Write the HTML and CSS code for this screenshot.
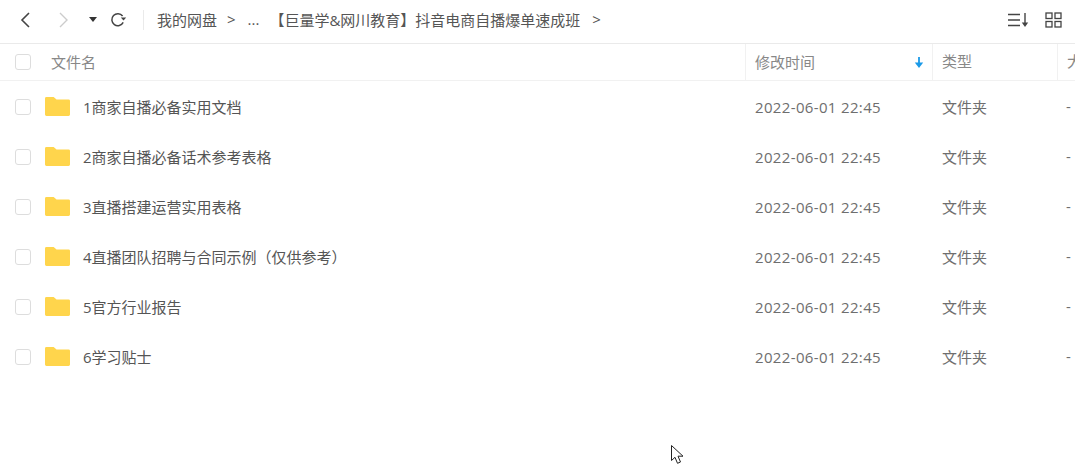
FILE: index.html
```html
<!DOCTYPE html>
<html lang="zh-CN">

<head>
    <meta charset="UTF-8">
    <title>我的网盘</title>
    <link rel="stylesheet" href="styles.css">
</head>

<body>
    <div class="toolbar">
        <svg class="nav_back" width="12" height="16" viewBox="0 0 12 16"><path d="M10 1 3 8l7 7" fill="none" stroke="#444" stroke-width="1.6"/></svg>
        <svg class="nav_forward" width="12" height="16" viewBox="0 0 12 16"><path d="M2 1l7 7-7 7" fill="none" stroke="#ccc" stroke-width="1.4"/></svg>
        <svg class="nav_drop" width="8" height="5" viewBox="0 0 8 5"><path d="M0 0h8L4 5z" fill="#333"/></svg>
        <svg class="nav_refresh" width="17" height="16" viewBox="0 0 17 16"><path d="M13.2 10.4A6 6 0 1 1 12.6 4" fill="none" stroke="#444" stroke-width="1.5"/><path d="M10.8 5.4h5.4L13.5 8.6z" fill="#444"/></svg>
        <span class="divider"></span>
        <div class="crumbs">
            <span>我的网盘</span>
            <span class="sep">&gt;</span>
            <span class="dots">...</span>
            <span>【巨量学&amp;网川教育】抖音电商自播爆单速成班</span>
            <span class="sep sep_last">&gt;</span>
        </div>
        <div class="view_btns">
            <svg width="22" height="16" viewBox="0 0 22 16"><path d="M0 2.5h12M0 8h12M0 13.500h12" stroke="#444" stroke-width="1.3" fill="none"/><path d="M17 1v12" stroke="#444" stroke-width="1.400" fill="none"/><path d="M13.800 10.500h6.400L17 15z" fill="#444"/></svg>
            <svg width="17" height="16" viewBox="0 0 17 16"><g fill="none" stroke="#444" stroke-width="1.300"><rect x="1" y="1" width="6" height="5.500"/><rect x="10" y="1" width="6" height="5.500"/><rect x="1" y="9.500" width="6" height="5.500"/><rect x="10" y="9.500" width="6" height="5.500"/></g></svg>
        </div>
    </div>

    <div class="table_head">
        <div class="col_name"><span class="check"></span><span class="head_name">文件名</span></div>
        <div class="col_time">修改时间<svg class="sort_arrow" width="10" height="11" viewBox="0 0 10 11"><path d="M5 0v7" stroke="#1a9ae8" stroke-width="1.800"/><path d="M.8 5.500h8.400L5 11z" fill="#1a9ae8"/></svg></div>
        <div class="col_type">类型</div>
        <div class="col_size">大小</div>
    </div>

    <div class="row">
        <div class="col_name"><span class="check"></span><svg class="folder" width="25" height="19" viewBox="0 0 26 20" preserveAspectRatio="none"><path d="M1.500 0h7.500l3 2.500h12.500a1.500 1.500 0 0 1 1.500 1.500v14.500a1.500 1.500 0 0 1-1.500 1.500h-23A1.500 1.500 0 0 1 0 18.500V1.500A1.500 1.500 0 0 1 1.500 0z" fill="#ffd54c"/></svg><span class="file_name">1商家自播必备实用文档</span></div>
        <div class="col_time">2022-06-01 22:45</div>
        <div class="col_type">文件夹</div>
        <div class="col_size">-</div>
    </div>
    <div class="row">
        <div class="col_name"><span class="check"></span><svg class="folder" width="25" height="19" viewBox="0 0 26 20" preserveAspectRatio="none"><path d="M1.500 0h7.500l3 2.500h12.500a1.500 1.500 0 0 1 1.500 1.500v14.500a1.500 1.500 0 0 1-1.500 1.500h-23A1.500 1.500 0 0 1 0 18.500V1.500A1.500 1.500 0 0 1 1.500 0z" fill="#ffd54c"/></svg><span class="file_name">2商家自播必备话术参考表格</span></div>
        <div class="col_time">2022-06-01 22:45</div>
        <div class="col_type">文件夹</div>
        <div class="col_size">-</div>
    </div>
    <div class="row">
        <div class="col_name"><span class="check"></span><svg class="folder" width="25" height="19" viewBox="0 0 26 20" preserveAspectRatio="none"><path d="M1.500 0h7.500l3 2.500h12.500a1.500 1.500 0 0 1 1.500 1.500v14.500a1.500 1.500 0 0 1-1.500 1.500h-23A1.500 1.500 0 0 1 0 18.500V1.500A1.500 1.500 0 0 1 1.500 0z" fill="#ffd54c"/></svg><span class="file_name">3直播搭建运营实用表格</span></div>
        <div class="col_time">2022-06-01 22:45</div>
        <div class="col_type">文件夹</div>
        <div class="col_size">-</div>
    </div>
    <div class="row">
        <div class="col_name"><span class="check"></span><svg class="folder" width="25" height="19" viewBox="0 0 26 20" preserveAspectRatio="none"><path d="M1.500 0h7.500l3 2.500h12.500a1.500 1.500 0 0 1 1.500 1.500v14.500a1.500 1.500 0 0 1-1.500 1.500h-23A1.500 1.500 0 0 1 0 18.500V1.500A1.500 1.500 0 0 1 1.500 0z" fill="#ffd54c"/></svg><span class="file_name">4直播团队招聘与合同示例（仅供参考）</span></div>
        <div class="col_time">2022-06-01 22:45</div>
        <div class="col_type">文件夹</div>
        <div class="col_size">-</div>
    </div>
    <div class="row">
        <div class="col_name"><span class="check"></span><svg class="folder" width="25" height="19" viewBox="0 0 26 20" preserveAspectRatio="none"><path d="M1.500 0h7.500l3 2.500h12.500a1.500 1.500 0 0 1 1.500 1.500v14.500a1.500 1.500 0 0 1-1.500 1.500h-23A1.500 1.500 0 0 1 0 18.500V1.500A1.500 1.500 0 0 1 1.500 0z" fill="#ffd54c"/></svg><span class="file_name">5官方行业报告</span></div>
        <div class="col_time">2022-06-01 22:45</div>
        <div class="col_type">文件夹</div>
        <div class="col_size">-</div>
    </div>
    <div class="row">
        <div class="col_name"><span class="check"></span><svg class="folder" width="25" height="19" viewBox="0 0 26 20" preserveAspectRatio="none"><path d="M1.500 0h7.500l3 2.500h12.500a1.500 1.500 0 0 1 1.500 1.500v14.500a1.500 1.500 0 0 1-1.500 1.500h-23A1.500 1.500 0 0 1 0 18.500V1.500A1.500 1.500 0 0 1 1.500 0z" fill="#ffd54c"/></svg><span class="file_name">6学习贴士</span></div>
        <div class="col_time">2022-06-01 22:45</div>
        <div class="col_type">文件夹</div>
        <div class="col_size">-</div>
    </div>

    <!-- mouse pointer caught in the screenshot -->
    <svg class="pointer" width="13" height="20" viewBox="0 0 13 20"><path d="M.5.500v15l3.500-3.200 2.500 6 3-1.300-2.500-5.800h5z" fill="#fff" stroke="#222" stroke-width="1"/></svg>
</body>

</html>
```

FILE: styles.css
```css
* {
    margin: 0;
    padding: 0;
    box-sizing: border-box;
}

html,
body {
    height: 100%;
    overflow: hidden;
}

body {
    position: relative;
    background: white;
    font-family: "Open Sans", "Noto Sans CJK SC", sans-serif;
    font-size: 15px;
    color: rgb(102, 102, 102);
}

.toolbar {
    height: 44px;
    display: flex;
    align-items: center;
    padding-left: 19px;
    padding-bottom: 4px;
    border-bottom: 1px solid rgb(234, 234, 234);
}

.nav_forward {
    margin-left: 27px;
}

.nav_drop {
    margin-left: 19px;
}

.nav_refresh {
    margin-left: 13px;
}

.divider {
    width: 1px;
    height: 20px;
    margin: 0 13px 0 16px;
    background: rgb(234, 234, 234);
}

.crumbs {
    display: flex;
    align-items: center;
    gap: 10px;
    padding-bottom: 1px;
    color: rgb(85, 85, 85);
    white-space: nowrap;
}

.crumbs .dots {
    margin-left: 2px;
}

.crumbs .sep_last {
    margin-left: 2px;
}

.view_btns {
    margin-left: auto;
    margin-right: 13px;
    display: flex;
    align-items: center;
    gap: 15px;
}

.table_head,
.row {
    display: flex;
    align-items: center;
}

.table_head {
    height: 37px;
    border-bottom: 1px solid rgb(241, 241, 241);
    color: rgb(136, 136, 136);
}

.row {
    height: 50px;
}

.col_name {
    width: 745px;
    flex: none;
    display: flex;
    align-items: center;
    padding-left: 15px;
}

.col_time {
    width: 187px;
    flex: none;
    display: flex;
    align-items: center;
    padding-left: 10px;
}

.col_type {
    width: 125px;
    flex: none;
    padding-left: 10px;
}

.col_size {
    flex: none;
    padding-left: 9px;
    white-space: nowrap;
}

.table_head .col_time,
.table_head .col_type,
.table_head .col_size {
    height: 100%;
    line-height: 34px;
    padding-left: 9px;
    border-left: 1px solid rgb(241, 241, 241);
}

.row .col_time,
.row .col_type,
.row .col_size {
    color: rgb(110, 110, 110);
}

.row .col_time {
    padding-top: 1px;
    letter-spacing: 0.35px;
}

.sort_arrow {
    margin-left: auto;
    margin-right: 8px;
}

.check {
    width: 16px;
    height: 16px;
    flex: none;
    border: 1px solid rgb(221, 221, 221);
    border-radius: 3px;
}

.row .check,
.row .folder {
    margin-top: 1px;
}

.head_name {
    margin-left: 20px;
    padding-bottom: 2px;
}

.folder {
    margin-left: 14px;
    flex: none;
}

.file_name {
    margin-left: 13px;
    color: rgb(85, 85, 85);
}

.pointer {
    position: absolute;
    left: 671px;
    top: 445px;
}
```
